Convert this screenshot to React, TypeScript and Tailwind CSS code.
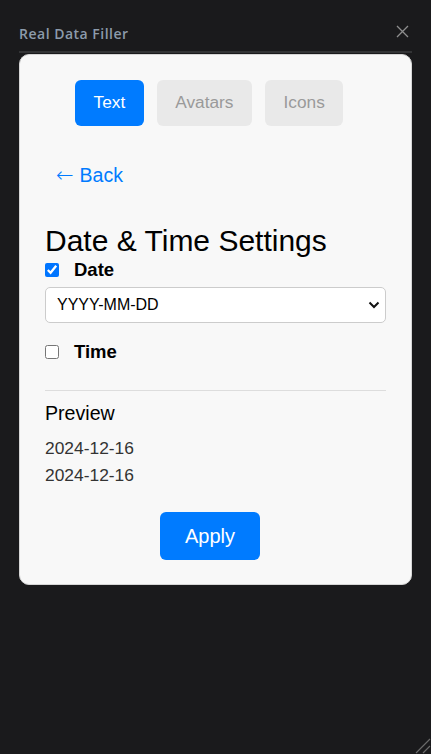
import React from "react";

const tabs = ["Text", "Avatars", "Icons"];

const App: React.FC = () => {
  return (
    <div className="relative h-[754px] w-full overflow-hidden bg-[#1a1a1c]">
      {/* header */}
      <div className="px-[19px] pt-[24px]">
        <div className="flex items-center justify-between border-b-2 border-[#333436] pb-[7px]">
          <span className="font-['Open_Sans',sans-serif] text-[14px] font-semibold leading-[20px] tracking-[0.5px] text-[#8c9bab]">
            Real Data Filler
          </span>
          <svg width="13" height="13" viewBox="0 0 13 13" className="mr-[3px] mt-[-6px]">
            <path d="M1 1 L12 12 M12 1 L1 12" stroke="#8e8e8e" strokeWidth="1.3" fill="none" />
          </svg>
        </div>
      </div>

      {/* card */}
      <div className="mx-[19px] mt-[1px] rounded-[10px] border border-[#d6d6d6] bg-[#f8f8f8] px-[25px] pb-[24px] pt-[25px] font-['Liberation_Sans',Arial,sans-serif]">
        <div className="flex gap-[13px] pl-[30px]">
          {tabs.map((t, i) => (
            <button
              key={t}
              className={`h-[46px] rounded-[6px] px-[18.5px] text-[17.3px] ${
                i === 0 ? "bg-[#007bff] text-white" : "bg-[#e9e9e9] text-[#9a9a9a]"
              }`}
            >
              {t}
            </button>
          ))}
        </div>

        <div className="mt-[38px] flex items-center pl-[11px] text-[19.5px] leading-[23px] text-[#007bff]">
          <span className="font-['DejaVu_Sans',sans-serif] text-[21px] font-light">←</span>
          <span className="ml-[6px]">Back</span>
        </div>

        <h2 className="mt-[37px] text-[30px] leading-[34px] text-black">Date &amp; Time Settings</h2>

        <label className="mt-[1px] flex h-[21px] items-center">
          <input type="checkbox" defaultChecked className="m-0 h-[14px] w-[14px] accent-[#0075ff]" />
          <span className="ml-[15px] text-[18.5px] font-bold text-black">Date</span>
        </label>

        <div className="relative mt-[7px]">
          <select className="h-[36px] w-full appearance-none rounded-[5px] border border-[#cccccc] bg-white pl-[11px] text-[16px] text-black outline-none">
            <option>YYYY-MM-DD</option>
          </select>
          <svg
            width="12"
            height="8"
            viewBox="0 0 12 8"
            className="pointer-events-none absolute right-[6px] top-[14px]"
          >
            <path d="M1.5 1.5 L6 6 L10.5 1.5" stroke="#111" strokeWidth="2" fill="none" />
          </svg>
        </div>

        <label className="mt-[18px] flex h-[21px] items-center">
          <input type="checkbox" className="m-0 h-[14px] w-[14px]" />
          <span className="ml-[15px] text-[18.5px] font-bold text-black">Time</span>
        </label>

        <div className="mt-[28px] border-t border-[#dddddd]" />

        <div className="mt-[11px] text-[19.6px] leading-[23px] text-black">Preview</div>
        <div className="mt-[10px] text-[17.4px] leading-[27px] text-[#333333]">
          <div>2024-12-16</div>
          <div>2024-12-16</div>
        </div>

        <button className="ml-[115px] mt-[23px] h-[48px] w-[100px] rounded-[6px] bg-[#007bff] text-[20px] text-white">
          Apply
        </button>
      </div>

      {/* resize grip */}
      <svg width="24" height="24" viewBox="0 0 24 24" className="absolute bottom-0 right-0">
        <path d="M9 23 L23 9 M16 23 L23 16" stroke="#6a6a6a" strokeWidth="1.2" fill="none" />
      </svg>
    </div>
  );
};

export default App;
